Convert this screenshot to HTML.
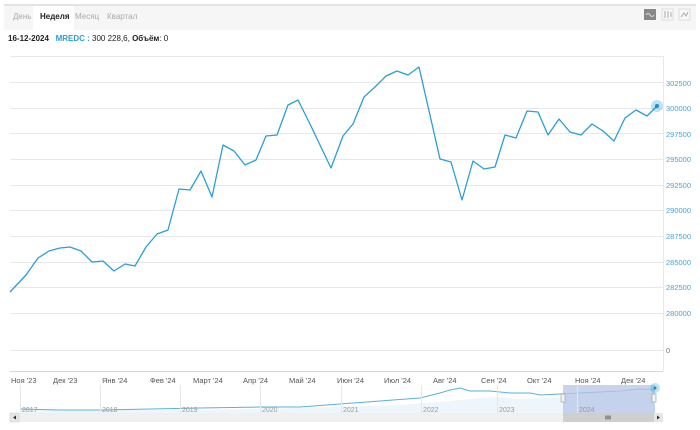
<!DOCTYPE html>
<html><head><meta charset="utf-8"><style>
body{margin:0;width:700px;height:430px;background:#fff;font-family:"Liberation Sans",sans-serif;overflow:hidden;position:relative}
.bar{position:absolute;left:4px;top:4px;width:692px;height:24px;background:#f6f6f6;border-top:2px solid #e4e4e4}
.tab{position:absolute;top:6px;font-size:8px;color:#aaa}
.info{position:absolute;left:8px;top:34px;font-size:8px;color:#222}
</style></head><body>
<div class="bar">
<div style="position:absolute;left:29px;top:0;width:41px;height:24px;background:#fff"></div>
<span class="tab" style="left:9px">День</span>
<span class="tab" style="left:36px;color:#222;font-weight:bold">Неделя</span>
<span class="tab" style="left:71px">Месяц</span>
<span class="tab" style="left:103px">Квартал</span>
</div>
<div class="info"><b>16-12-2024</b>&nbsp;&nbsp; <b style="color:#2a9fd6">MREDC :</b> 300 228,6, <b>Объём</b>: 0</div>
<svg width="700" height="430" style="position:absolute;left:0;top:0" font-family="Liberation Sans, sans-serif">
<rect x="644" y="9" width="12" height="11" fill="#888"/>
<path d="M646 15 q2-3 4 0 t4 0" stroke="#ddd" fill="none" stroke-width="1"/>
<rect x="662" y="9" width="11" height="11" fill="#f8f8f8" stroke="#ddd"/>
<path d="M665 11v7M668 11v7M671 12v5" stroke="#aaa"/>
<rect x="679" y="9" width="11" height="11" fill="#f8f8f8" stroke="#ddd"/>
<path d="M681 17l3-4 2 3 2-4" stroke="#aaa" fill="none"/>
<g stroke="#e8e8e8" stroke-width="1">
<line x1="10" y1="56.5" x2="663" y2="56.5"/>
<line x1="10" y1="82.5" x2="663" y2="82.5"/><line x1="10" y1="108.5" x2="663" y2="108.5"/>
<line x1="10" y1="133.5" x2="663" y2="133.5"/><line x1="10" y1="159.5" x2="663" y2="159.5"/>
<line x1="10" y1="185.5" x2="663" y2="185.5"/><line x1="10" y1="210.5" x2="663" y2="210.5"/>
<line x1="10" y1="236.5" x2="663" y2="236.5"/><line x1="10" y1="262.5" x2="663" y2="262.5"/>
<line x1="10" y1="287.5" x2="663" y2="287.5"/><line x1="10" y1="313.5" x2="663" y2="313.5"/>
<line x1="10" y1="350.5" x2="663" y2="350.5"/>
<line x1="663.5" y1="56" x2="663.5" y2="371"/>
</g>
<g fill="#4aa3d8" font-size="7.5">
<text x="666" y="86">302500</text><text x="666" y="111">300000</text><text x="666" y="137">297500</text>
<text x="666" y="162">295000</text><text x="666" y="188">292500</text><text x="666" y="213">290000</text>
<text x="666" y="239">287500</text><text x="666" y="265">285000</text><text x="666" y="290">282500</text>
<text x="666" y="316">280000</text><text x="666" y="353" fill="#777">0</text>
</g>
<line x1="10" y1="371.5" x2="663" y2="371.5" stroke="#ccd6eb"/>
<g font-size="7.5" fill="#555">
<text x="11" y="383">Ноя '23</text><text x="53" y="383">Дек '23</text><text x="102" y="383">Янв '24</text>
<text x="150" y="383">Фев '24</text><text x="193" y="383">Март '24</text><text x="243" y="383">Апр '24</text>
<text x="289" y="383">Май '24</text><text x="337" y="383">Июн '24</text><text x="384" y="383">Июл '24</text>
<text x="433" y="383">Авг '24</text><text x="481" y="383">Сен '24</text><text x="527" y="383">Окт '24</text>
<text x="575" y="383">Ноя '24</text><text x="621" y="383">Дек '24</text>
</g>
<polyline fill="none" stroke="#2a9fd6" stroke-width="1.3" stroke-linejoin="round" points="10,292 26,275 38,258 49,251 60,248 70,247 81,251 92,262 103,261 114,271 125,264 135,266 146,247 157,234 168,230 179,189 190,190 201,171 212,197 223,145 234,151 245,165 256,160 266,136 277,135 288,105 298,100 309,122 320,145 331,168 343,136 353,124 364,97 375,87 386,76 397,71 408,75 419,67 440,159 451,162 462,200 473,161 484,169 495,167 505,135 516,138 527,111 538,112 548,135 559,119 570,132 581,135 592,124 603,131 614,141 625,118 636,110 647,116 657,106"/>
<circle cx="657" cy="106" r="6" fill="#2a9fd6" opacity="0.3"/>
<circle cx="657" cy="106" r="2" fill="#1a8fc6"/>
<rect x="20" y="385" width="635" height="28" fill="#fff"/>
<path d="M20 413 L20 409 100 410 200 410 300 408 400 405 450 401 480 398 500 397 520 399 560 397 590 393 630 392 655 392 L655 413Z" fill="#eef6fb"/>
<polyline fill="none" stroke="#5ab1dc" stroke-width="1" points="20,409 60,410 100,410 150,409 200,408 260,407 300,407 340,404 380,401 420,398 440,393 450,390 460,388 470,391 490,391 510,393 530,393 540,395 580,393 600,392 620,391 640,389 655,390"/>
<rect x="563" y="385" width="92" height="28" fill="#b7c6e6" opacity="0.75"/>
<g stroke="#e6e6e6"><line x1="20.5" y1="385" x2="20.5" y2="413"/><line x1="100.5" y1="385" x2="100.5" y2="413"/><line x1="180.5" y1="385" x2="180.5" y2="413"/><line x1="260.5" y1="385" x2="260.5" y2="413"/><line x1="341.5" y1="385" x2="341.5" y2="413"/><line x1="421.5" y1="385" x2="421.5" y2="413"/><line x1="497.5" y1="385" x2="497.5" y2="413"/><line x1="577.5" y1="385" x2="577.5" y2="413"/></g>
<g font-size="7" fill="#999"><text x="22" y="412">2017</text><text x="102" y="412">2018</text><text x="182" y="412">2019</text><text x="262" y="412">2020</text><text x="343" y="412">2021</text><text x="423" y="412">2022</text><text x="499" y="412">2023</text><text x="579" y="412">2024</text></g>
<rect x="561" y="394" width="4" height="8" fill="#f2f2f2" stroke="#999" stroke-width="0.6"/>
<rect x="652" y="394" width="4" height="8" fill="#f2f2f2" stroke="#999" stroke-width="0.6"/>
<circle cx="655" cy="388" r="5" fill="#2a9fd6" opacity="0.3"/><circle cx="655" cy="388" r="1.5" fill="#1a8fc6"/>
<rect x="10" y="413" width="653" height="9" fill="#f0f0f0"/>
<rect x="563" y="413" width="91" height="9" fill="#cfcfcf"/>
<rect x="10" y="413" width="9" height="9" fill="#e6e6e6" stroke="#ccc" stroke-width="0.5"/>
<path d="M16 415.5l-3 2 3 2z" fill="#333"/>
<rect x="654" y="413" width="9" height="9" fill="#e6e6e6"/>
<path d="M657 415.5l3 2-3 2z" fill="#333"/>
<path d="M606 415.5v4M608 415.5v4M610 415.5v4" stroke="#333" stroke-width="0.8"/>
</svg>
</body></html>
